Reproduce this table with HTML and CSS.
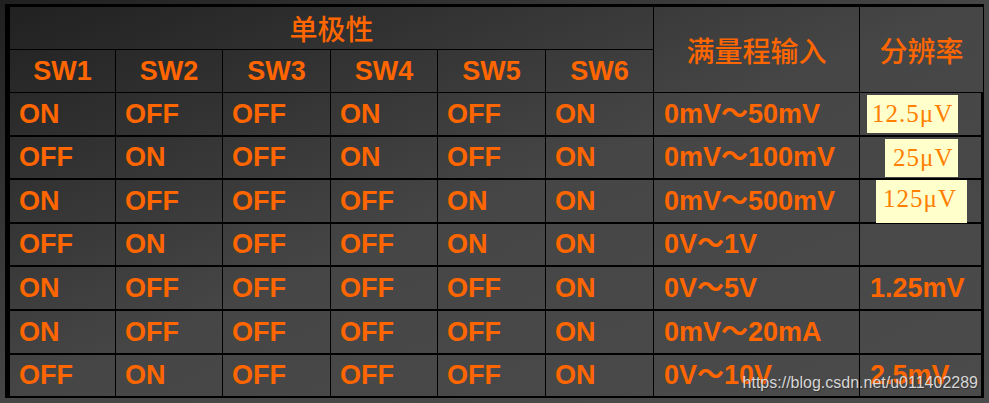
FILE: index.html
```html
<!DOCTYPE html>
<html lang="zh-CN">
<head>
<meta charset="utf-8">
<title>单极性 开关设置</title>
<link rel="stylesheet" href="styles.css">
</head>
<body>
<div class="sheet">
  <div class="hd hd-group cjk">单极性</div>
  <div class="hd hd-range cjk">满量程输入</div>
  <div class="hd hd-res cjk">分辨率</div>
  <div class="hd sw">SW1</div>
  <div class="hd sw">SW2</div>
  <div class="hd sw">SW3</div>
  <div class="hd sw">SW4</div>
  <div class="hd sw">SW5</div>
  <div class="hd sw">SW6</div>

  <div class="c">ON</div><div class="c">OFF</div><div class="c">OFF</div><div class="c">ON</div><div class="c">OFF</div><div class="c">ON</div>
  <div class="c wide">0mV～50mV</div>
  <div class="c last"><span class="res r1">12.5μV</span></div>

  <div class="c">OFF</div><div class="c">ON</div><div class="c">OFF</div><div class="c">ON</div><div class="c">OFF</div><div class="c">ON</div>
  <div class="c wide">0mV～100mV</div>
  <div class="c last"><span class="res r2">25μV</span></div>

  <div class="c">ON</div><div class="c">OFF</div><div class="c">OFF</div><div class="c">OFF</div><div class="c">ON</div><div class="c">ON</div>
  <div class="c wide">0mV～500mV</div>
  <div class="c last"><span class="res r3">125μV</span></div>

  <div class="c">OFF</div><div class="c">ON</div><div class="c">OFF</div><div class="c">OFF</div><div class="c">ON</div><div class="c">ON</div>
  <div class="c wide">0V～1V</div>
  <div class="c last"></div>

  <div class="c">ON</div><div class="c">OFF</div><div class="c">OFF</div><div class="c">OFF</div><div class="c">OFF</div><div class="c">ON</div>
  <div class="c wide">0V～5V</div>
  <div class="c last wide">1.25mV</div>

  <div class="c">ON</div><div class="c">OFF</div><div class="c">OFF</div><div class="c">OFF</div><div class="c">OFF</div><div class="c">ON</div>
  <div class="c wide">0mV～20mA</div>
  <div class="c last"></div>

  <div class="c end">OFF</div><div class="c end">ON</div><div class="c end">OFF</div><div class="c end">OFF</div><div class="c end">OFF</div><div class="c end">ON</div>
  <div class="c wide end">0V～10V</div>
  <div class="c last wide end">2.5mV</div>
</div>
<div class="watermark">https://blog.csdn.net/u011402289</div>
</body>
</html>
```
FILE: styles.css
```css
html {
  background: linear-gradient(to bottom right, #202020 0%, #464646 50%, #4b4b4b 100%);
  min-height: 100%;
}
body {
  margin: 0;
  height: 403px;
  overflow: hidden;
  position: relative;
  font-family: "Liberation Sans", Arial, "Noto Sans CJK SC", sans-serif;
  color: #ff6600;
}
.sheet {
  margin: 4px 0 0 5px;
  width: 979px;
  box-sizing: border-box;
  border-top: 3px solid #000;
  border-left: 5px solid #000;
  border-bottom: 2px solid #000;
  display: grid;
  grid-template-columns: 106px 107px 108px 107px 108px 108px 206px 124px;
  grid-template-rows: 43px 43px 44px 43px 44px 43px 44px 44px 41px;
}
.hd {
  box-sizing: border-box;
  border-right: 1px solid #000;
  border-bottom: 1px solid #000;
  display: flex;
  align-items: center;
  justify-content: center;
  font-weight: bold;
  line-height: 31px;
}
.cjk {
  font-family: "Noto Sans CJK SC", sans-serif;
  font-size: 28px;
  font-weight: 500;
  line-height: 32px;
}
.hd-group {
  grid-column: 1 / 7;
  grid-row: 1;
}
.hd-range {
  grid-column: 7;
  grid-row: 1 / 3;
}
.hd-res {
  grid-column: 8;
  grid-row: 1 / 3;
}
.sw {
  font-size: 27px;
}
.c {
  box-sizing: border-box;
  border-right: 1px solid #000;
  border-bottom: 2px solid #000;
  display: flex;
  align-items: center;
  padding-left: 9px;
  font-size: 27px;
  font-weight: bold;
  line-height: 31px;
  white-space: nowrap;
}
.c.wide {
  padding-left: 10px;
}
.c.last {
  border-right: 3px solid #000;
  padding-left: 0;
}
.c.last.wide {
  padding-left: 10px;
}
.c.end {
  border-bottom: 0;
}
.res {
  display: block;
  box-sizing: border-box;
  background: #ffffcc;
  color: #ff8000;
  font-family: "Liberation Serif", "Times New Roman", serif;
  font-weight: normal;
  font-size: 25px;
  letter-spacing: 1px;
  height: 38px;
  line-height: 38px;
  padding-left: 5px;
}
.r1 {
  width: 91px;
  margin-left: 7px;
}
.r2 {
  width: 73px;
  margin-left: 25px;
  padding-left: 8px;
}
.r3 {
  width: 91px;
  height: 43px;
  margin-left: 16px;
  padding-left: 7px;
  padding-bottom: 5px;
}
.watermark {
  position: absolute;
  right: 11px;
  top: 374px;
  font-family: "Liberation Sans", Arial, sans-serif;
  font-size: 16px;
  line-height: 18px;
  color: #d6d6d6;
  text-shadow: 1px 1px 1px rgba(0, 0, 0, 0.35);
  white-space: nowrap;
}
```
